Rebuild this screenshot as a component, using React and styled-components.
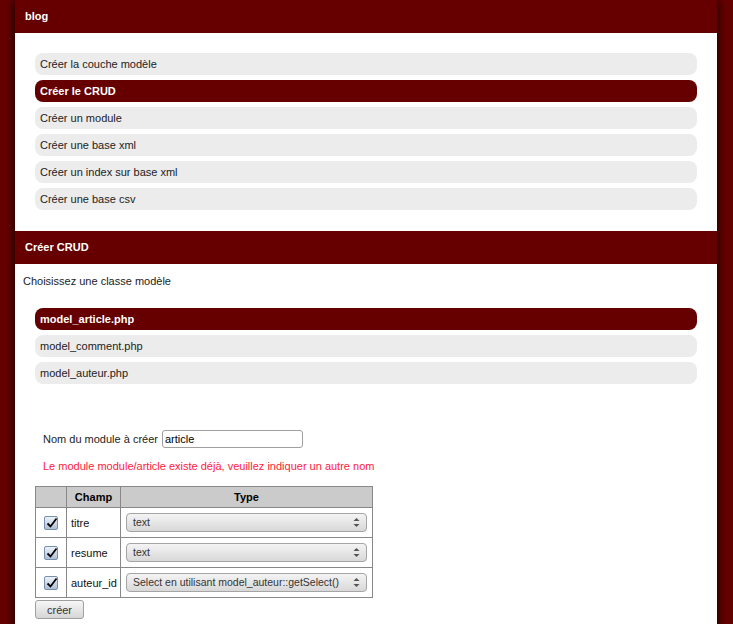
import React from "react";
import styled, { createGlobalStyle } from "styled-components";

const GlobalStyle = createGlobalStyle`
  html, body { margin: 0; padding: 0; }
  body {
    background: #660000;
    font-family: "Liberation Sans", Arial, sans-serif;
    font-size: 11px;
    color: #222;
  }
`;

const Page = styled.div`
  width: 702px;
  margin: 0 0 0 15px;
  background: #fff;
  min-height: 700px;
  box-shadow: 0 0 10px #000;
`;

const Header = styled.h2`
  margin: 0;
  height: 33px;
  line-height: 33px;
  padding: 0 10px;
  background: #660000;
  color: #fff;
  font-size: 11px;
  font-weight: bold;
`;

const MenuSection = styled.div`
  padding: 20px 20px 21px;
`;

const List = styled.ul`
  list-style: none;
  margin: 0;
  padding: 0;
  display: flex;
  flex-direction: column;
  gap: 5px;
`;

const Item = styled.li`
  height: 22px;
  line-height: 22px;
  padding: 0 5px;
  border-radius: 8px;
  background: ${(p) => (p.$active ? "#660000" : "#ececec")};
  color: ${(p) => (p.$active ? "#fff" : "#222")};
  font-weight: ${(p) => (p.$active ? "bold" : "normal")};
`;

const CrudSection = styled.div`
  padding: 0 8px 40px;
`;

const Intro = styled.p`
  margin: 11px 0 0;
  line-height: 13px;
`;

const ClassList = styled(List)`
  margin: 20px 12px 0;
`;

const Form = styled.form`
  margin: 46px 0 0 12px;
`;

const NameRow = styled.div`
  display: flex;
  align-items: center;
  gap: 4px;
  padding-left: 8px;
`;

const TextInput = styled.input`
  width: 141px;
  height: 18px;
  box-sizing: border-box;
  border: 1px solid #a0a0a0;
  border-radius: 3px;
  padding: 0 2px;
  font-family: "Liberation Sans", Arial, sans-serif;
  font-size: 11px;
  color: #000;
`;

const Error = styled.p`
  margin: 12px 0 0 8px;
  line-height: 13px;
  color: #ff1a3c;
`;

const Table = styled.table`
  margin-top: 13px;
  border-collapse: collapse;
  table-layout: fixed;
  width: 338px;
`;

const Th = styled.th`
  height: 20px;
  padding: 0;
  background: #cbcbcb;
  border: 1px solid #888;
  font-size: 11px;
  font-weight: bold;
  color: #000;
  text-align: center;
  width: ${(p) => p.$w || "auto"};
`;

const Td = styled.td`
  height: 29px;
  padding: ${(p) => (p.$center ? "0" : p.$select ? "0 5px" : "0 4px")};
  border: 1px solid #888;
  text-align: ${(p) => (p.$center ? "center" : "left")};
  color: #111;
`;

const CheckBox = styled.span`
  display: inline-block;
  width: 14px;
  height: 14px;
  box-sizing: border-box;
  border: 1px solid #7890ad;
  border-radius: 2px;
  background: linear-gradient(#eef3f9, #aebfd4);
  vertical-align: middle;
  position: relative;
  svg { position: absolute; left: 0; top: -1px; }
`;

const SelectWrap = styled.div`
  position: relative;
  height: 19px;
  box-sizing: border-box;
  border: 1px solid #a5a5a5;
  border-radius: 4px;
  background: linear-gradient(#f4f4f4, #d8d8d8);
  padding: 0 20px 0 6px;
  line-height: 17px;
  font-size: 10.5px;
  color: #333;
  white-space: nowrap;
  overflow: hidden;
`;

const Arrows = styled.span`
  position: absolute;
  right: 6px;
  top: 3px;
  display: flex;
`;

const Button = styled.button`
  margin-top: 2px;
  width: 49px;
  height: 19px;
  border: 1px solid #a0a0a0;
  border-radius: 3px;
  background: linear-gradient(#f6f6f6, #d6d6d6);
  font-family: "Liberation Sans", Arial, sans-serif;
  font-size: 11px;
  color: #333;
  padding: 0;
`;

const Check = () => (
  <CheckBox>
    <svg width="14" height="14" viewBox="0 0 14 14">
      <path d="M2.5 7.5 L5.5 10.5 L11.5 2.5" fill="none" stroke="#000" strokeWidth="1.8" />
    </svg>
  </CheckBox>
);

const Select = ({ children }) => (
  <SelectWrap>
    {children}
    <Arrows>
      <svg width="7" height="11" viewBox="0 0 7 11">
        <path d="M0.5 4 L3.5 1 L6.5 4 Z" fill="#555" />
        <path d="M0.5 7 L3.5 10 L6.5 7 Z" fill="#555" />
      </svg>
    </Arrows>
  </SelectWrap>
);

const menu = [
  "Créer la couche modèle",
  "Créer le CRUD",
  "Créer un module",
  "Créer une base xml",
  "Créer un index sur base xml",
  "Créer une base csv",
];

const classes = ["model_article.php", "model_comment.php", "model_auteur.php"];

const fields = [
  ["titre", "text"],
  ["resume", "text"],
  ["auteur_id", "Select en utilisant model_auteur::getSelect()"],
];

export default function App() {
  return (
    <>
      <GlobalStyle />
      <Page>
        <Header>blog</Header>
        <MenuSection>
          <List>
            {menu.map((m, i) => (
              <Item key={m} $active={i === 1}>{m}</Item>
            ))}
          </List>
        </MenuSection>
        <Header>Créer CRUD</Header>
        <CrudSection>
          <Intro>Choisissez une classe modèle</Intro>
          <ClassList>
            {classes.map((c, i) => (
              <Item key={c} $active={i === 0}>{c}</Item>
            ))}
          </ClassList>
          <Form onSubmit={(e) => e.preventDefault()}>
            <NameRow>
              <span>Nom du module à créer</span>
              <TextInput defaultValue="article" />
            </NameRow>
            <Error>Le module module/article existe déjà, veuillez indiquer un autre nom</Error>
            <Table>
              <thead>
                <tr>
                  <Th $w="30px"></Th>
                  <Th $w="53px">Champ</Th>
                  <Th>Type</Th>
                </tr>
              </thead>
              <tbody>
                {fields.map(([f, t]) => (
                  <tr key={f}>
                    <Td $center><Check /></Td>
                    <Td>{f}</Td>
                    <Td $select><Select>{t}</Select></Td>
                  </tr>
                ))}
              </tbody>
            </Table>
            <Button type="submit">créer</Button>
          </Form>
        </CrudSection>
      </Page>
    </>
  );
}
